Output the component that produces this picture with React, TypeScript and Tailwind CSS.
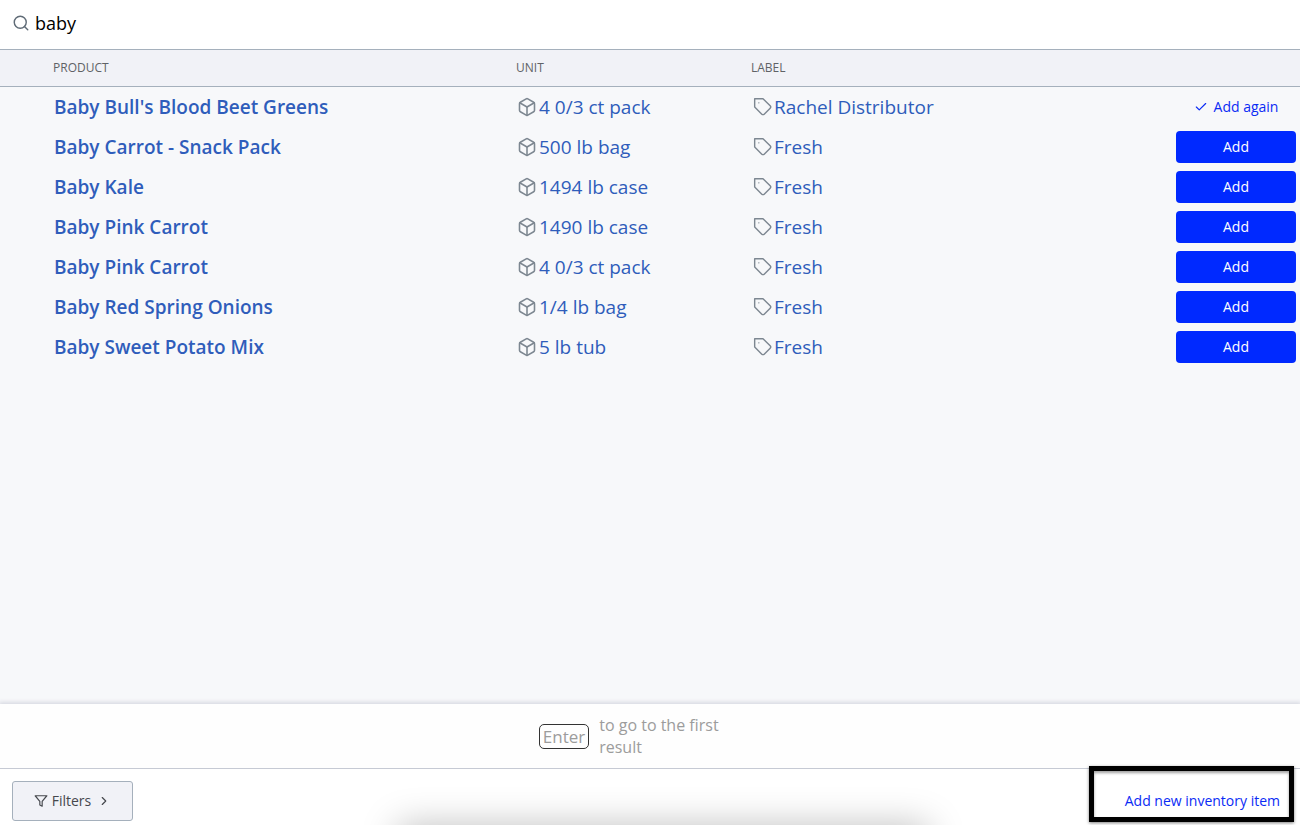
import { useState } from 'react';
import { FiBox, FiCheck, FiChevronRight, FiFilter, FiSearch, FiTag } from 'react-icons/fi';

type Product = {
  id: number;
  name: string;
  unit: string;
  label: string;
  added?: boolean;
};

const products: Product[] = [
  { id: 1, name: "Baby Bull's Blood Beet Greens", unit: '4 0/3 ct pack', label: 'Rachel Distributor', added: true },
  { id: 2, name: 'Baby Carrot - Snack Pack', unit: '500 lb bag', label: 'Fresh' },
  { id: 3, name: 'Baby Kale', unit: '1494 lb case', label: 'Fresh' },
  { id: 4, name: 'Baby Pink Carrot', unit: '1490 lb case', label: 'Fresh' },
  { id: 5, name: 'Baby Pink Carrot', unit: '4 0/3 ct pack', label: 'Fresh' },
  { id: 6, name: 'Baby Red Spring Onions', unit: '1/4 lb bag', label: 'Fresh' },
  { id: 7, name: 'Baby Sweet Potato Mix', unit: '5 lb tub', label: 'Fresh' },
];

function SearchBar() {
  const [query, setQuery] = useState('baby');

  return (
    <div className="flex h-[49px] shrink-0 items-center gap-[5px] bg-white pb-[3px] pl-3">
      <label htmlFor="product-search" aria-label="Search products">
        <FiSearch className="size-[18px] text-[#5f6b76] [stroke-width:1.9]" aria-hidden />
      </label>
      <input
        id="product-search"
        type="text"
        value={query}
        onChange={(e) => setQuery(e.target.value)}
        className="h-full flex-1 bg-transparent text-lg text-black outline-none"
      />
    </div>
  );
}

function ProductRow({ product }: { product: Product }) {
  return (
    <tr className="h-10 text-[19px] text-[#2f5dbb]">
      <td className="pl-[54px] font-semibold">{product.name}</td>
      <td className="pl-[10px]">
        <div className="flex items-center gap-0.5">
          <FiBox className="size-5 text-[#7d8791] [stroke-width:1.9]" aria-hidden />
          {product.unit}
        </div>
      </td>
      <td className="pl-3">
        <div className="flex items-center gap-px">
          <FiTag className="size-5 text-[#7d8791] [stroke-width:1.7]" aria-hidden />
          {product.label}
        </div>
      </td>
      <td className="pr-1 text-sm">
        {product.added ? (
          <button type="button" className="flex h-8 w-full items-center justify-center gap-1.5 text-[#0a2bf5]">
            <FiCheck className="size-3.5" aria-hidden />
            Add again
          </button>
        ) : (
          <button type="button" className="block h-8 w-full rounded bg-[#0029ff] text-white">
            Add
          </button>
        )}
      </td>
    </tr>
  );
}

function ProductTable() {
  return (
    <table className="w-full table-fixed border-separate border-spacing-0">
      <colgroup>
        <col className="w-[39%]" />
        <col className="w-[18%]" />
        <col />
        <col className="w-[124px]" />
      </colgroup>
      <thead>
        <tr className="h-[38px] bg-[#f1f2f7] text-left text-xs text-[#5f6266] [&>*]:border-y [&>*]:border-[#a5b0bc] [&>*]:font-normal">
          <th className="pl-[53px]">PRODUCT</th>
          <th className="pl-[9px]">UNIT</th>
          <th className="pl-[10px]">LABEL</th>
          <td />
        </tr>
      </thead>
      <tbody>
        {products.map((product) => (
          <ProductRow key={product.id} product={product} />
        ))}
      </tbody>
    </table>
  );
}

function KeyboardHint() {
  return (
    <div className="flex h-16 shrink-0 items-center justify-center gap-2.5 bg-[#fefefe] text-[#9c9c9c] shadow-[0_-1px_4px_1px_#d8dae2]">
      <kbd className="rounded-[5px] border border-[#333] px-[3px] font-[inherit] text-[17px] leading-[23px]">Enter</kbd>
      <p className="w-[162px] text-base leading-[22px]">to go to the first result</p>
    </div>
  );
}

function Footer() {
  return (
    <footer className="relative flex h-[57px] shrink-0 items-start justify-between overflow-hidden border-t border-[#c6cad4] bg-white pl-3">
      {/* shadow of the sheet below the fold */}
      <div className="absolute top-full left-[51%] h-10 w-[530px] -translate-x-1/2 shadow-[0_0_36px_0_#00000040]" />
      <button
        type="button"
        className="relative mt-3 flex h-10 w-[121px] items-center justify-center rounded-[3px] border border-[#a5b0bc] bg-[#f1f2f7] text-sm text-[#45484d]"
      >
        <FiFilter className="mr-1 size-3.5" aria-hidden />
        Filters
        <FiChevronRight className="ml-1.5 size-3.5" aria-hidden />
      </button>
    </footer>
  );
}

export default function App() {
  return (
    <div className="relative flex min-h-screen flex-col bg-[#f7f8fa] font-['Open_Sans','Noto_Sans',sans-serif]">
      <SearchBar />
      <main className="flex-1">
        <ProductTable />
      </main>
      <KeyboardHint />
      <Footer />
      {/* highlighted action overlaps the footer border */}
      <div className="absolute right-[6px] bottom-[3px] flex h-14 w-[205px] items-center justify-end border-[5px] border-black pt-3.5 pr-[9px] text-sm shadow-[0_1px_3px_#00000080,inset_0_2px_3px_#00000060]">
        <a href="#new-item" className="whitespace-nowrap text-[#0a2bf5]">
          Add new inventory item
        </a>
      </div>
    </div>
  );
}
